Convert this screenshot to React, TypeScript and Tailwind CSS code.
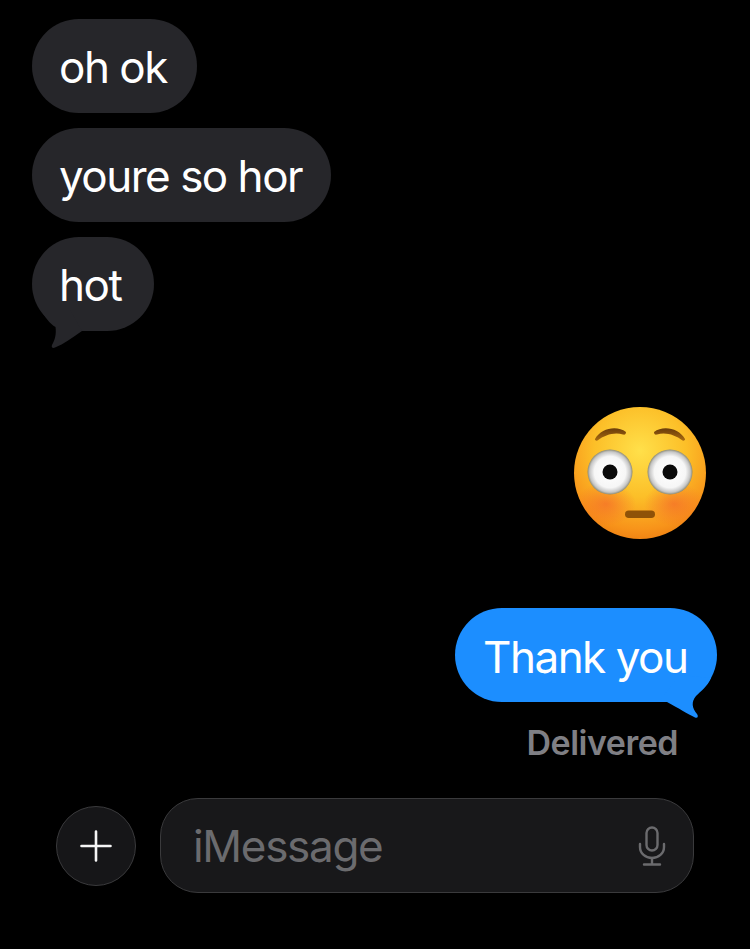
const font = "font-['Inter','Roboto',sans-serif]";

function Incoming({ children, tail = false, w }: { children: string; tail?: boolean; w: string }) {
  return (
    <div className={`relative flex h-[94px] items-center rounded-[47px] bg-[#26262a] pl-[27px] pt-[2px] text-[44px] tracking-[-1.5px] text-white ${w}`}>
      <span className="relative z-10">{children}</span>
      {tail && (
        <svg className="absolute left-0 top-[60px]" width="60" height="60" viewBox="32 297 60 60">
          <path d="M41 310 C45 317 50 324 55.500 327 C56.500 334 55 340 52 345 C51 347.500 53 348.500 55 347.500 C64 344 72 338 82 331 L70 310 Z" fill="#26262a" />
        </svg>
      )}
    </div>
  );
}

function Emoji() {
  return (
    <svg width="132" height="134" viewBox="-66 -67 132 134" aria-label="flushed face">
      <defs>
        <radialGradient id="face" cx="50%" cy="33%" r="70%">
          <stop offset="0%" stopColor="#ffe04a" />
          <stop offset="50%" stopColor="#fcbf28" />
          <stop offset="85%" stopColor="#f8941a" />
          <stop offset="100%" stopColor="#ee7f12" />
        </radialGradient>
        <radialGradient id="blush" cx="50%" cy="50%" r="50%">
          <stop offset="0%" stopColor="#f4662a" stopOpacity="0.65" />
          <stop offset="100%" stopColor="#f4662a" stopOpacity="0" />
        </radialGradient>
        <radialGradient id="eye" cx="50%" cy="50%" r="50%">
          <stop offset="0%" stopColor="#ffffff" />
          <stop offset="70%" stopColor="#f6f6f6" />
          <stop offset="90%" stopColor="#c6c6c6" />
          <stop offset="100%" stopColor="#8d8a72" />
        </radialGradient>
        <linearGradient id="brow" x1="0" y1="0" x2="0" y2="1">
          <stop offset="0%" stopColor="#6a3c0a" />
          <stop offset="100%" stopColor="#a86a10" />
        </linearGradient>
        <clipPath id="faceClip">
          <circle cx="0" cy="0" r="66" />
        </clipPath>
      </defs>
      <circle cx="0" cy="0" r="66" fill="url(#face)" />
      <g clipPath="url(#faceClip)">
        <ellipse cx="-34" cy="31" rx="30" ry="22" fill="url(#blush)" />
        <ellipse cx="34" cy="31" rx="30" ry="22" fill="url(#blush)" />
      </g>
      <circle cx="-30" cy="-1" r="22.500" fill="url(#eye)" />
      <circle cx="30" cy="-1" r="22.500" fill="url(#eye)" />
      <circle cx="-30" cy="-1" r="7.500" fill="#0a0a0a" />
      <circle cx="30" cy="-1" r="7.500" fill="#0a0a0a" />
      <path d="M-45 -34 C-39 -45 -23 -48 -14 -41 C-14 -39 -15 -38 -17 -38.500 C-26 -41 -35 -38 -42.500 -32.500 C-44 -32 -45.500 -33 -45 -34 Z" fill="url(#brow)" />
      <path d="M45 -34 C39 -45 23 -48 14 -41 C14 -39 15 -38 17 -38.500 C26 -41 35 -38 42.500 -32.500 C44 -32 45.500 -33 45 -34 Z" fill="url(#brow)" />
      <rect x="-15" y="37.500" width="30" height="7.500" rx="3.750" fill="#8f5208" />
    </svg>
  );
}

export default function App() {
  return (
    <div className={`flex h-[949px] w-[750px] flex-col overflow-hidden bg-black ${font}`}>
      <div className="flex flex-col items-start gap-[15px] pl-[32px] pt-[19px]">
        <Incoming w="w-[165px]">oh ok</Incoming>
        <Incoming w="w-[299px]">youre so hor</Incoming>
        <Incoming w="w-[122px]" tail>hot</Incoming>
      </div>
      <div className="mt-[75px] flex justify-end pr-[44px]">
        <Emoji />
      </div>
      <div className="mt-[68px] flex justify-end pr-[33px]">
        <div className="relative flex h-[94px] w-[262px] items-center rounded-[47px] bg-[#1c8eff] pl-[28px] pt-[3px] text-[44px] tracking-[-1.5px] text-white">
          <span className="relative z-10">Thank you</span>
          <svg className="absolute right-0 top-[65px]" width="60" height="47" viewBox="657 673 60 47">
            <path d="M660 700 L667 702 C678 708 688 714 695 717.500 C698 718.500 698.500 716 697 714 C692 708 691 702 696 696 C701 691 707 687 711 678 L680 675 Z" fill="#1c8eff" />
          </svg>
        </div>
      </div>
      <div className="mt-[21px] flex h-[40px] justify-end pr-[72px] text-[34px] font-semibold leading-[40px] tracking-[-0.5px] text-[#7f7f84]">
        Delivered
      </div>
      <div className="mt-[35px] flex items-center pl-[56px]">
        <div className="flex h-[80px] w-[80px] items-center justify-center rounded-full border border-[#3a3a3c] bg-[#161618]">
          <svg width="32" height="32" viewBox="0 0 32 32">
            <path d="M16 1.500V30.500M1.500 16H30.500" stroke="#f5f5f5" strokeWidth="2.600" strokeLinecap="round" />
          </svg>
        </div>
        <div className="ml-[24px] flex h-[95px] w-[534px] items-center justify-between rounded-[38px] border border-[#3a3a3c] bg-[#18181a] pl-[32px] pr-[27px] text-[44px] tracking-[-1.3px] text-[#6b6b6e]">
          <span>iMessage</span>
          <svg width="28" height="40" viewBox="0 0 28 40" fill="none" stroke="#6b6b6e" strokeWidth="2.400" strokeLinecap="round">
            <rect x="8.500" y="1.500" width="11" height="23" rx="5.500" />
            <path d="M2 18V21C2 27.500 7.500 32 14 32C20.500 32 26 27.500 26 21V18" />
            <path d="M14 32V38M6 38.500H22" />
          </svg>
        </div>
      </div>
    </div>
  );
}
